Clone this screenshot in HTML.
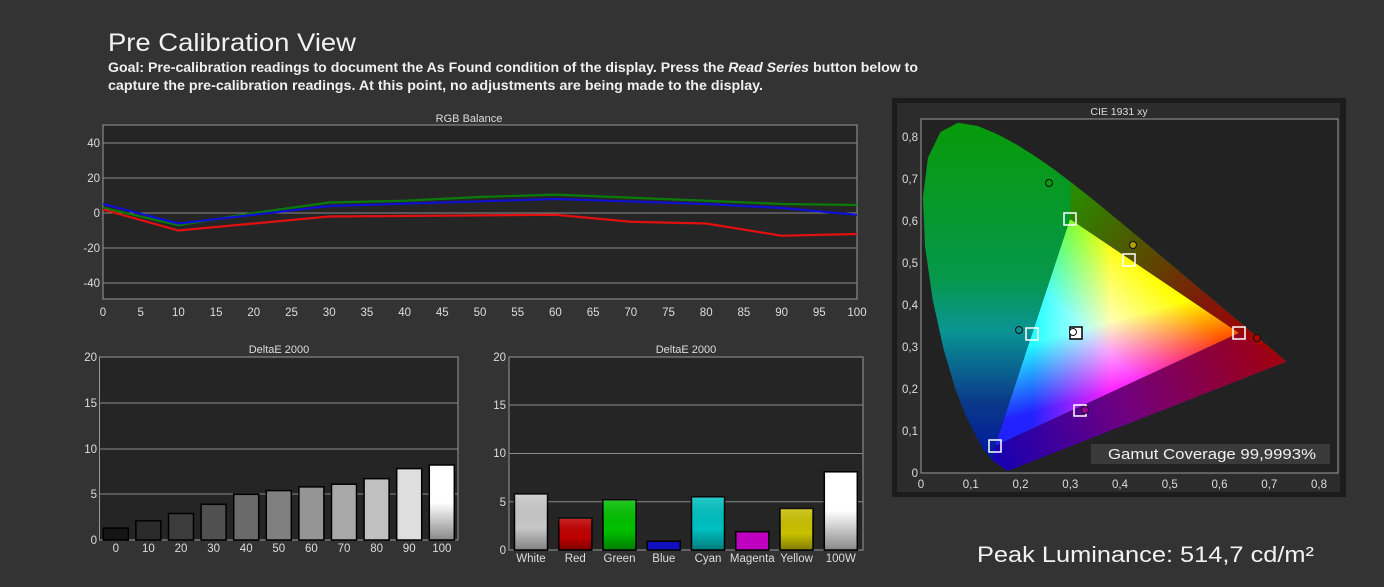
<!DOCTYPE html>
<html><head><meta charset="utf-8"><style>
html,body{margin:0;padding:0;background:#333;}
svg{display:block}
text{font-family:"Liberation Sans",sans-serif;}
</style></head><body>
<svg width="1384" height="587" viewBox="0 0 1384 587" xmlns="http://www.w3.org/2000/svg">
<defs>
<linearGradient id="loc" x1="0" y1="120" x2="0" y2="472" gradientUnits="userSpaceOnUse">
<stop offset="0" stop-color="#079a07"/><stop offset="0.45" stop-color="#06984a"/><stop offset="0.6" stop-color="#0a9494"/><stop offset="0.8" stop-color="#0a3a8a"/><stop offset="1" stop-color="#0010a0"/></linearGradient>
<linearGradient id="rside" x1="1070" y1="200" x2="1260" y2="350" gradientUnits="userSpaceOnUse">
<stop offset="0" stop-color="#2a8a00"/><stop offset="0.4" stop-color="#5a4a00"/><stop offset="0.7" stop-color="#801808"/><stop offset="1" stop-color="#a80000"/></linearGradient>
<linearGradient id="bside" x1="1000" y1="460" x2="1280" y2="360" gradientUnits="userSpaceOnUse">
<stop offset="0" stop-color="#1a00b0"/><stop offset="0.45" stop-color="#700080"/><stop offset="1" stop-color="#a00010"/></linearGradient>
<linearGradient id="gr" x1="1239" y1="333" x2="1032.5" y2="332.5" gradientUnits="userSpaceOnUse"><stop offset="0" stop-color="#f00"/><stop offset="0.62" stop-color="#f00"/><stop offset="1" stop-color="#000"/></linearGradient>
<linearGradient id="gg" x1="1070" y1="219" x2="1117" y2="389.5" gradientUnits="userSpaceOnUse"><stop offset="0" stop-color="#0f0"/><stop offset="0.62" stop-color="#0f0"/><stop offset="1" stop-color="#000"/></linearGradient>
<linearGradient id="gb" x1="995" y1="446" x2="1154.5" y2="276" gradientUnits="userSpaceOnUse"><stop offset="0" stop-color="#22f"/><stop offset="0.62" stop-color="#22f"/><stop offset="1" stop-color="#000"/></linearGradient>
<linearGradient id="wb" x1="0" y1="0" x2="0" y2="1"><stop offset="0" stop-color="#fff"/><stop offset="0.5" stop-color="#fff"/><stop offset="1" stop-color="#888"/></linearGradient>
<linearGradient id="shade" x1="0" y1="0" x2="0" y2="1"><stop offset="0" stop-color="#fff" stop-opacity="0.15"/><stop offset="0.6" stop-color="#000" stop-opacity="0"/><stop offset="1" stop-color="#000" stop-opacity="0.35"/></linearGradient>
</defs>

<text x="108" y="51" font-size="25" fill="#f2f2f2" textLength="248" lengthAdjust="spacingAndGlyphs">Pre Calibration View</text>
<text x="108" y="72" font-size="13.5" font-weight="bold" fill="#f0f0f0" textLength="810" lengthAdjust="spacingAndGlyphs">Goal: Pre-calibration readings to document the As Found condition of the display. Press the <tspan font-style="italic">Read Series</tspan> button below to</text>
<text x="108" y="90" font-size="13.5" font-weight="bold" fill="#f0f0f0" textLength="655" lengthAdjust="spacingAndGlyphs">capture the pre-calibration readings. At this point, no adjustments are being made to the display.</text>

<!-- RGB Balance -->
<text x="469" y="122" font-size="11" fill="#ddd" text-anchor="middle">RGB Balance</text>
<rect x="103" y="125" width="754" height="174" fill="#252525" stroke="#999" stroke-width="1"/>
<g stroke="#8a8a8a" stroke-width="1">
<line x1="103" y1="143" x2="857" y2="143"/><line x1="103" y1="178" x2="857" y2="178"/><line x1="103" y1="213" x2="857" y2="213"/><line x1="103" y1="248" x2="857" y2="248"/><line x1="103" y1="283" x2="857" y2="283"/>
</g>
<g font-size="11.5" fill="#ddd" text-anchor="end">
<text x="100" y="147">40</text><text x="100" y="182">20</text><text x="100" y="217">0</text><text x="100" y="252">-20</text><text x="100" y="287">-40</text></g>
<g font-size="11.5" fill="#ddd" text-anchor="middle">
<text x="103" y="316">0</text><text x="140.7" y="316">5</text><text x="178.4" y="316">10</text><text x="216.1" y="316">15</text><text x="253.8" y="316">20</text><text x="291.5" y="316">25</text><text x="329.2" y="316">30</text><text x="366.9" y="316">35</text><text x="404.6" y="316">40</text><text x="442.3" y="316">45</text><text x="480" y="316">50</text><text x="517.7" y="316">55</text><text x="555.4" y="316">60</text><text x="593.1" y="316">65</text><text x="630.8" y="316">70</text><text x="668.5" y="316">75</text><text x="706.2" y="316">80</text><text x="743.9" y="316">85</text><text x="781.6" y="316">90</text><text x="819.3" y="316">95</text><text x="857" y="316">100</text></g>
<polyline fill="none" stroke="#0a7a0a" stroke-width="2.2" points="103,207.75 178.4,225.25 253.8,213 329.2,202.5 404.6,200.75 480,197 555.4,194.6 706.2,200.75 781.6,204 857,205"/>
<polyline fill="none" stroke="#1010d0" stroke-width="2.2" points="103,204 178.4,223.5 329.2,206 555.4,199 706.2,204 781.6,208 857,214.75"/>
<polyline fill="none" stroke="#e01010" stroke-width="2.2" points="103,209.5 178.4,230.5 253.8,223.5 329.2,216.5 555.4,214.75 630.8,221.75 706.2,223.5 781.6,235.75 857,234"/>

<!-- Left DeltaE -->
<text x="279" y="353" font-size="11" fill="#ddd" text-anchor="middle">DeltaE 2000</text>
<rect x="99.5" y="357" width="358.5" height="183" fill="#252525" stroke="#999"/>
<g stroke="#8a8a8a"><line x1="99.5" y1="403" x2="458" y2="403"/><line x1="99.5" y1="449" x2="458" y2="449"/><line x1="99.5" y1="494" x2="458" y2="494"/></g>
<g font-size="11.5" fill="#ddd" text-anchor="end"><text x="97" y="361">20</text><text x="97" y="407">15</text><text x="97" y="453">10</text><text x="97" y="498">5</text><text x="97" y="544">0</text></g>
<g stroke="#000" stroke-width="1.5">
<rect x="103.3" y="528.1" width="25" height="11.9" fill="#151515"/>
<rect x="135.9" y="520.8" width="25" height="19.2" fill="#2a2a2a"/>
<rect x="168.5" y="513.5" width="25" height="26.5" fill="#3c3c3c"/>
<rect x="201.1" y="504.3" width="25" height="35.7" fill="#505050"/>
<rect x="233.7" y="494.3" width="25" height="45.7" fill="#6a6a6a"/>
<rect x="266.3" y="490.6" width="25" height="49.4" fill="#808080"/>
<rect x="298.9" y="486.9" width="25" height="53.1" fill="#959595"/>
<rect x="331.5" y="484.2" width="25" height="55.8" fill="#a8a8a8"/>
<rect x="364.1" y="478.7" width="25" height="61.3" fill="#c0c0c0"/>
<rect x="396.7" y="468.6" width="25" height="71.4" fill="#dedede"/>
<rect x="429.3" y="465" width="25" height="75" fill="url(#wb)"/>
</g>
<g font-size="11.5" fill="#ddd" text-anchor="middle">
<text x="115.8" y="552">0</text><text x="148.4" y="552">10</text><text x="181" y="552">20</text><text x="213.6" y="552">30</text><text x="246.2" y="552">40</text><text x="278.8" y="552">50</text><text x="311.4" y="552">60</text><text x="344" y="552">70</text><text x="376.6" y="552">80</text><text x="409.2" y="552">90</text><text x="441.8" y="552">100</text></g>

<!-- Right DeltaE -->
<text x="686" y="353" font-size="11" fill="#ddd" text-anchor="middle">DeltaE 2000</text>
<rect x="509" y="357" width="354" height="193" fill="#252525" stroke="#999"/>
<g stroke="#8a8a8a"><line x1="509" y1="405" x2="863" y2="405"/><line x1="509" y1="453.5" x2="863" y2="453.5"/><line x1="509" y1="501.7" x2="863" y2="501.7"/></g>
<g font-size="11.5" fill="#ddd" text-anchor="end"><text x="506" y="361">20</text><text x="506" y="409">15</text><text x="506" y="457">10</text><text x="506" y="506">5</text><text x="506" y="554">0</text></g>
<g stroke="#000" stroke-width="1.5">
<rect x="514.5" y="494" width="33" height="56" fill="#c8c8c8"/>
<rect x="558.8" y="518.2" width="33" height="31.8" fill="#c00000"/>
<rect x="603" y="499.8" width="33" height="50.2" fill="#00c000"/>
<rect x="647.3" y="541.3" width="33" height="8.7" fill="#1010c0"/>
<rect x="691.5" y="496.9" width="33" height="53.1" fill="#00c0c0"/>
<rect x="735.8" y="531.7" width="33" height="18.3" fill="#c000c0"/>
<rect x="780" y="508.5" width="33" height="41.5" fill="#c8c000"/>
<rect x="824.3" y="471.8" width="33" height="78.2" fill="url(#wb)"/>
</g>
<g fill="url(#shade)"><rect x="514.5" y="494" width="33" height="56"/><rect x="558.8" y="518.2" width="33" height="31.8"/><rect x="603" y="499.8" width="33" height="50.2"/><rect x="691.5" y="496.9" width="33" height="53.1"/><rect x="780" y="508.5" width="33" height="41.5"/></g>
<g font-size="11.5" fill="#ddd" text-anchor="middle">
<text x="531" y="562">White</text><text x="575.3" y="562">Red</text><text x="619.5" y="562">Green</text><text x="663.8" y="562">Blue</text><text x="708" y="562">Cyan</text><text x="752.3" y="562">Magenta</text><text x="796.5" y="562">Yellow</text><text x="840.8" y="562">100W</text></g>

<!-- CIE -->
<rect x="892" y="98" width="454" height="399" fill="#1c1c1c"/>
<rect x="897" y="103" width="443" height="389" fill="#2c2c2c"/>
<text x="1119" y="115" font-size="10.5" fill="#ddd" text-anchor="middle">CIE 1931 xy</text>
<rect x="921" y="119" width="417" height="354" fill="#222" stroke="#999"/>
<path fill="url(#loc)" d="M1007.6,470.9 L992.6,460.5 982.7,448.7 966.4,417.3 955.2,388.7 943.6,349.1 932.7,299.7 925.1,246.9 922.9,198 927.9,157.9 940.4,132 958,122.8 977.8,126 998,134.5 1017,144.7 1035.2,156.2 1053.2,168.8 1071,182.2 1088.8,196.3 1106.6,210.7 1124.3,225.4 1141.9,240 1159.2,254.5 1176,268.6 1192,282.2 1207.2,294.8 1220.9,306.5 1232.9,316.6 1243.5,325.4 1252.2,332.7 1259.3,338.7 1286.5,361.6 Z"/>
<path fill="url(#rside)" d="M1070,219 L1071,182.2 1088.8,196.3 1106.6,210.7 1124.3,225.4 1141.9,240 1159.2,254.5 1176,268.6 1192,282.2 1207.2,294.8 1220.9,306.5 1232.9,316.6 1243.5,325.4 1252.2,332.7 1259.3,338.7 1286.5,361.6 1239,333 Z"/>
<path fill="url(#bside)" d="M995,446 L1239,333 1286.5,361.6 1007.6,470.9 992.6,460.5 Z"/>
<g style="isolation:isolate">
<polygon points="1239,333 1070,219 995,446" fill="#000"/>
<polygon points="1239,333 1070,219 995,446" fill="url(#gr)" style="mix-blend-mode:screen"/>
<polygon points="1239,333 1070,219 995,446" fill="url(#gg)" style="mix-blend-mode:screen"/>
<polygon points="1239,333 1070,219 995,446" fill="url(#gb)" style="mix-blend-mode:screen"/>
</g>
<g fill="none" stroke="#fff" stroke-width="1.5">
<rect x="1064" y="213" width="12" height="12"/><rect x="1123" y="254" width="12" height="12"/><rect x="1233" y="327" width="12" height="12"/><rect x="1026" y="328" width="12" height="12"/><rect x="1074" y="405" width="12" height="11"/><rect x="989" y="440" width="12" height="12"/>
</g>
<rect x="1070" y="327" width="12" height="12" fill="#fff" stroke="#000" stroke-width="1.5"/>
<g stroke="#111" stroke-width="1">
<circle cx="1049" cy="183" r="3.5" fill="#0a9a0a"/><circle cx="1133" cy="245" r="3.5" fill="#b0a000"/><circle cx="1257" cy="338" r="3.5" fill="#b00000"/><circle cx="1019" cy="330" r="3.5" fill="#0a9090"/><circle cx="1085" cy="410" r="3.5" fill="#a000a0"/><circle cx="1073" cy="332" r="3.5" fill="#fff"/>
</g>
<g font-size="11.5" fill="#ddd" text-anchor="end">
<text x="918" y="141">0,8</text><text x="918" y="183">0,7</text><text x="918" y="225">0,6</text><text x="918" y="267">0,5</text><text x="918" y="309">0,4</text><text x="918" y="351">0,3</text><text x="918" y="393">0,2</text><text x="918" y="435">0,1</text><text x="918" y="477">0</text></g>
<g font-size="11.5" fill="#ddd" text-anchor="middle">
<text x="921" y="488">0</text><text x="970.8" y="488">0,1</text><text x="1020.5" y="488">0,2</text><text x="1070.3" y="488">0,3</text><text x="1120" y="488">0,4</text><text x="1169.8" y="488">0,5</text><text x="1219.5" y="488">0,6</text><text x="1269.3" y="488">0,7</text><text x="1319" y="488">0,8</text></g>
<rect x="1091" y="444" width="239" height="20" fill="#3a3a3a"/>
<text x="1108" y="459" font-size="15" fill="#f0f0f0" textLength="208" lengthAdjust="spacingAndGlyphs">Gamut Coverage 99,9993%</text>

<text x="977" y="562" font-size="22" fill="#f2f2f2" textLength="337" lengthAdjust="spacingAndGlyphs">Peak Luminance: 514,7 cd/m²</text>
</svg>
</body></html>
